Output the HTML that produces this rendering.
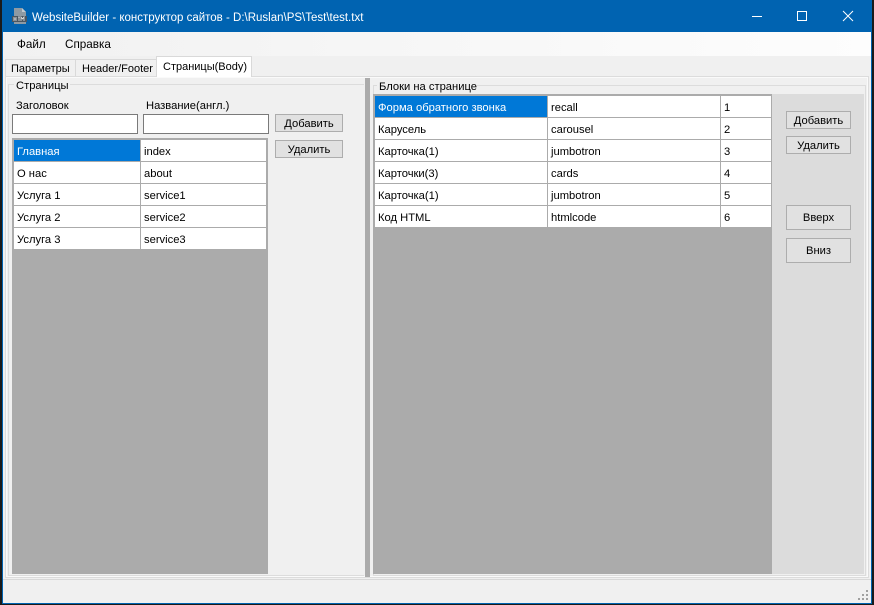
<!DOCTYPE html>
<html><head><meta charset="utf-8">
<style>
html,body{margin:0;padding:0;width:874px;height:605px;overflow:hidden;background:#1a1a1a}
body{position:relative;font-family:"Liberation Sans",sans-serif;font-size:11.2px;color:#000}
.a{position:absolute;box-sizing:border-box}
.t{position:absolute;white-space:nowrap;line-height:14px}
.btn{position:absolute;box-sizing:border-box;background:#e1e1e1;border:1px solid #adadad;text-align:center;white-space:nowrap}
.inp{position:absolute;box-sizing:border-box;background:#fff;border:1px solid #7a7a7a}
.cell{position:absolute;box-sizing:border-box;background:#fff;padding-left:3px;line-height:24px;white-space:nowrap;overflow:hidden;height:21px}
.sel{background:#0078d7;color:#fff}
</style></head><body>
<div class="a" style="left:2px;top:0;width:870px;height:604px;background:#0063b1"></div>
<div class="a" style="left:3px;top:32px;width:868px;height:571px;background:#f0f0f0"></div>
<!-- title -->
<svg class="a" style="left:12px;top:7px" width="16" height="18" viewBox="0 0 16 18"><path d="M2 1H10L14 5V17H2Z" fill="#8e9aa3"/><path d="M10 1V5H14Z" fill="#c2c9ce"/><rect x="0" y="9" width="15" height="6" fill="#4a5660"/><path d="M2 10V14M2 12H4M4 10V14M6 10H8M7 10V14M9 14V10L10.5 12L12 10V14" stroke="#e8e8e8" stroke-width="0.8" fill="none"/></svg>
<div class="t" style="left:32px;top:11px;color:#fff;font-size:11.5px">WebsiteBuilder - конструктор сайтов - D:\Ruslan\PS\Test\test.txt</div>
<svg class="a" style="left:750px;top:8px" width="110" height="16" viewBox="0 0 110 16" fill="none" stroke="#fff" stroke-width="1"><path d="M2 8.5H12"/><rect x="47.5" y="3.5" width="9" height="9"/><path d="M93 3L103 13M103 3L93 13"/></svg>
<!-- menu -->
<div class="a" style="left:3px;top:32px;width:868px;height:24px;background:linear-gradient(90deg,#f1f1f1,#fdfdfd)"></div>
<div class="t" style="left:17px;top:38px;font-size:11.7px">Файл</div>
<div class="t" style="left:65px;top:38px;font-size:11.7px">Справка</div>
<!-- tabs -->
<div class="a" style="left:5px;top:59px;width:71px;height:18px;background:#f0f0f0;border:1px solid #d9d9d9;border-bottom:0"></div>
<div class="a" style="left:75px;top:59px;width:82px;height:18px;background:#f0f0f0;border:1px solid #d9d9d9;border-bottom:0"></div>
<div class="t" style="left:11px;top:62px;font-size:11px">Параметры</div>
<div class="t" style="left:82px;top:62px;font-size:11px">Header/Footer</div>
<div class="a" style="left:5px;top:76px;width:864px;height:502px;background:#f0f0f0;border:1px solid #dcdcdc;box-shadow:inset 0 0 0 1px #fafafa"></div>
<div class="a" style="left:156px;top:56px;width:96px;height:21px;background:#fff;border:1px solid #d9d9d9;border-bottom:0"></div>
<div class="t" style="left:163px;top:60px;font-size:11px">Страницы(Body)</div>
<div class="a" style="left:3px;top:579px;width:868px;height:1px;background:#d8d8d8"></div>
<!-- left group -->
<div class="a" style="left:8px;top:84px;width:356px;height:492px;border:1px solid #dcdcdc;border-right:0"></div>
<div class="a" style="left:14px;top:80px;width:56px;height:10px;background:#f0f0f0"></div>
<div class="t" style="left:16px;top:79px">Страницы</div>
<div class="t" style="left:16px;top:99px">Заголовок</div>
<div class="t" style="left:146px;top:99px">Название(англ.)</div>
<div class="inp" style="left:12px;top:114px;width:126px;height:20px"></div>
<div class="inp" style="left:143px;top:114px;width:126px;height:20px"></div>
<div class="btn" style="left:275px;top:114px;width:68px;height:18px;line-height:18px">Добавить</div>
<div class="btn" style="left:275px;top:140px;width:68px;height:18px;line-height:18px">Удалить</div>
<div class="a" style="left:12px;top:138px;width:256px;height:436px;background:#ababab"></div>
<div class="cell sel" style="left:14px;top:140px;width:126px">Главная</div><div class="cell" style="left:141px;top:140px;width:125px">index</div>
<div class="cell" style="left:14px;top:162px;width:126px">О нас</div><div class="cell" style="left:141px;top:162px;width:125px">about</div>
<div class="cell" style="left:14px;top:184px;width:126px">Услуга 1</div><div class="cell" style="left:141px;top:184px;width:125px">service1</div>
<div class="cell" style="left:14px;top:206px;width:126px">Услуга 2</div><div class="cell" style="left:141px;top:206px;width:125px">service2</div>
<div class="cell" style="left:14px;top:228px;width:126px">Услуга 3</div><div class="cell" style="left:141px;top:228px;width:125px">service3</div>
<!-- splitter -->
<div class="a" style="left:365px;top:78px;width:5px;height:499px;background:#ababab"></div>
<!-- right group -->
<div class="a" style="left:373px;top:85px;width:493px;height:491px;border:1px solid #dcdcdc"></div>
<div class="a" style="left:377px;top:80px;width:100px;height:10px;background:#f0f0f0"></div>
<div class="t" style="left:379px;top:80px">Блоки на странице</div>
<div class="a" style="left:373px;top:94px;width:491px;height:480px;background:#dcdcdc"></div>
<div class="a" style="left:373px;top:94px;width:399px;height:480px;background:#ababab"></div>
<div class="cell sel" style="left:375px;top:96px;width:172px">Форма обратного звонка</div><div class="cell" style="left:548px;top:96px;width:172px">recall</div><div class="cell" style="left:721px;top:96px;width:50px">1</div>
<div class="cell" style="left:375px;top:118px;width:172px">Карусель</div><div class="cell" style="left:548px;top:118px;width:172px">carousel</div><div class="cell" style="left:721px;top:118px;width:50px">2</div>
<div class="cell" style="left:375px;top:140px;width:172px">Карточка(1)</div><div class="cell" style="left:548px;top:140px;width:172px">jumbotron</div><div class="cell" style="left:721px;top:140px;width:50px">3</div>
<div class="cell" style="left:375px;top:162px;width:172px">Карточки(3)</div><div class="cell" style="left:548px;top:162px;width:172px">cards</div><div class="cell" style="left:721px;top:162px;width:50px">4</div>
<div class="cell" style="left:375px;top:184px;width:172px">Карточка(1)</div><div class="cell" style="left:548px;top:184px;width:172px">jumbotron</div><div class="cell" style="left:721px;top:184px;width:50px">5</div>
<div class="cell" style="left:375px;top:206px;width:172px">Код HTML</div><div class="cell" style="left:548px;top:206px;width:172px">htmlcode</div><div class="cell" style="left:721px;top:206px;width:50px">6</div>
<div class="btn" style="left:786px;top:111px;width:65px;height:18px;line-height:18px">Добавить</div>
<div class="btn" style="left:786px;top:136px;width:65px;height:18px;line-height:18px">Удалить</div>
<div class="btn" style="left:786px;top:205px;width:65px;height:25px;line-height:25px">Вверх</div>
<div class="btn" style="left:786px;top:238px;width:65px;height:25px;line-height:25px">Вниз</div>
<!-- grip -->
<svg class="a" style="left:858px;top:590px" width="12" height="12" fill="#a0a0a0"><rect x="8" y="0" width="2" height="2"/><rect x="4" y="4" width="2" height="2"/><rect x="8" y="4" width="2" height="2"/><rect x="0" y="8" width="2" height="2"/><rect x="4" y="8" width="2" height="2"/><rect x="8" y="8" width="2" height="2"/></svg>
</body></html>
